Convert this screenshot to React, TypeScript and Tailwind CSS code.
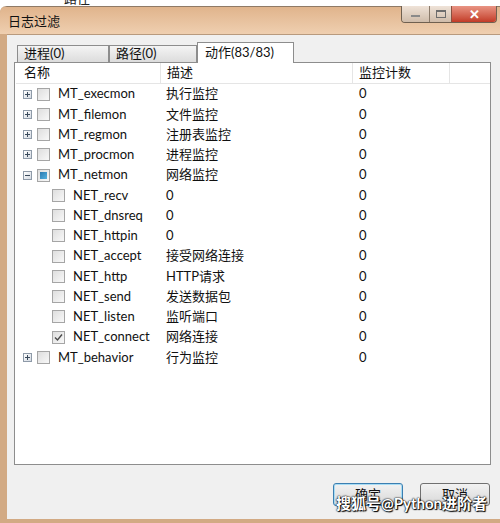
const ui = 'Lato, "Noto Sans CJK SC", sans-serif';

type Row = { name: string; desc: string; level: 0 | 1; state?: "plus" | "minus"; check?: "none" | "on" | "mixed" };

const rows: Row[] = [
  { name: "MT_execmon", desc: "执行监控", level: 0, state: "plus" },
  { name: "MT_filemon", desc: "文件监控", level: 0, state: "plus" },
  { name: "MT_regmon", desc: "注册表监控", level: 0, state: "plus" },
  { name: "MT_procmon", desc: "进程监控", level: 0, state: "plus" },
  { name: "MT_netmon", desc: "网络监控", level: 0, state: "minus", check: "mixed" },
  { name: "NET_recv", desc: "0", level: 1 },
  { name: "NET_dnsreq", desc: "0", level: 1 },
  { name: "NET_httpin", desc: "0", level: 1 },
  { name: "NET_accept", desc: "接受网络连接", level: 1 },
  { name: "NET_http", desc: "HTTP请求", level: 1 },
  { name: "NET_send", desc: "发送数据包", level: 1 },
  { name: "NET_listen", desc: "监听端口", level: 1 },
  { name: "NET_connect", desc: "网络连接", level: 1, check: "on" },
  { name: "MT_behavior", desc: "行为监控", level: 0, state: "plus" },
];

function Expander({ minus }: { minus?: boolean }) {
  return (
    <span className="relative flex h-[9px] w-[9px] items-center justify-center border border-[#8e9aa8] bg-gradient-to-br from-white to-[#d4dae2]">
      <span className="h-px w-[5px] bg-[#3a4a5c]" />
      {!minus && <span className="absolute h-[5px] w-px bg-[#3a4a5c]" />}
    </span>
  );
}

function Check({ state }: { state?: "none" | "on" | "mixed" }) {
  return (
    <span className="flex h-[13px] w-[13px] items-center justify-center border border-[#a5a5a5] bg-gradient-to-br from-[#dedede] to-[#f8f8f8]">
      {state === "mixed" && <span className="h-[7px] w-[7px] bg-gradient-to-br from-[#2a7ab0] to-[#55b2e0]" />}
      {state === "on" && (
        <svg width="9" height="9" viewBox="0 0 9 9">
          <path d="M1 4.5 L3.5 7 L8 1.5" fill="none" stroke="#4a4a4a" strokeWidth="1.4" />
        </svg>
      )}
    </span>
  );
}

function TabButton({ label, w, active }: { label: string; w: string; active?: boolean }) {
  return (
    <div
      className={
        active
          ? `relative z-10 -mb-px flex h-[21px] items-center border border-b-0 border-[#8d8d8d] bg-white pl-[7px] text-[13px] text-[#111] ${w}`
          : `flex h-[17px] items-center border border-b-0 border-[#8d8d8d] bg-gradient-to-b from-[#f4f4f4] to-[#dcdcdc] pl-[6px] text-[13px] text-[#111] ${w}`
      }
    >
      {label}
    </div>
  );
}

export default function App() {
  return (
    <div className="flex h-[523px] w-[500px] flex-col overflow-hidden bg-white" style={{ fontFamily: ui }}>
      <div className="h-[6px] overflow-hidden pl-[64px] text-[13px] leading-none text-[#222]">
        <div className="-mt-[8px]">路径</div>
      </div>

      <div className="flex flex-1 flex-col rounded-tl-[6px] border-t border-l-[7px] border-b-[4px] border-[#d2aa84] border-t-[#8f7a66] bg-[#f0f0f0]">
        <div className="flex h-[27px] -ml-[7px] bg-gradient-to-b from-[#e0b48c] to-[#efcfb0] pl-[8px] rounded-tl-[6px]">
          <div className="mt-[5px] flex-1 text-[13px] text-[#111]">日志过滤</div>
          <div className="mr-[3px] flex h-[17px] -mt-px overflow-hidden rounded-b-[4px] border border-t-0 border-[#6f6050]">
            <div className="flex w-[27px] items-end justify-center bg-gradient-to-b from-[#efe3d8] to-[#cfbcaa] pb-[5px]">
              <span className="h-[2px] w-[9px] bg-[#8a8a8a]" />
            </div>
            <div className="flex w-[22px] items-center justify-center border-l border-[#8a7a6a] bg-gradient-to-b from-[#efe3d8] to-[#cfbcaa]">
              <span className="h-[8px] w-[10px] border border-t-2 border-[#6d6d6d]" />
            </div>
            <div className="flex w-[45px] items-center justify-center border-l border-[#8a5040] bg-gradient-to-b from-[#e89484] to-[#c23a26] text-[13px] font-bold leading-none text-white">
              ✕
            </div>
          </div>
        </div>

        <div className="flex flex-1 flex-col border-t border-[#b89a7e] pl-[7px] pr-[9px]">
          <div className="mt-[6px] flex h-[21px] items-end pl-[3px]">
            <TabButton label="进程(0)" w="w-[92px]" />
            <TabButton label="路径(0)" w="w-[88px]" />
            <TabButton label="动作(83/83)" w="w-[97px]" active />
          </div>

          <div className="flex h-[403px] flex-col border border-[#8d8d8d] bg-white pl-px">
            <div className="flex h-[21px] items-center border-b border-[#e5e5e5] text-[13px] text-[#111]">
              <div className="w-[145px] border-r border-[#e5e5e5] pl-[8px]">名称</div>
              <div className="w-[192px] border-r border-[#e5e5e5] pl-[6px]">描述</div>
              <div className="w-[97px] border-r border-[#e5e5e5] pl-[6px]">监控计数</div>
            </div>
            <div className="flex flex-col">
              {rows.map((r) => (
                <div key={r.name} className="flex h-[20.25px] items-center text-[13px] text-[#111]">
                  <div className="flex w-[145px] items-center">
                    {r.level === 0 ? (
                      <>
                        <span className="ml-[7px]"><Expander minus={r.state === "minus"} /></span>
                        <span className="ml-[5px]"><Check state={r.check} /></span>
                        <span className="ml-[8px]">{r.name}</span>
                      </>
                    ) : (
                      <>
                        <span className="ml-[36px]"><Check state={r.check} /></span>
                        <span className="ml-[8px]">{r.name}</span>
                      </>
                    )}
                  </div>
                  <div className="w-[193px] pl-[5px]">{r.desc}</div>
                  <div className="pl-[5px]">0</div>
                </div>
              ))}
            </div>
          </div>

          <div className="mt-[18px] flex justify-end gap-[17px] pr-[1px]">
            <button className="flex h-[23px] w-[70px] items-center justify-center rounded-[3px] border border-[#3c7fb1] bg-gradient-to-b from-[#f2f2f2] to-[#d8d8d8] text-[13px] text-[#111] shadow-[inset_0_0_0_1px_#a8dcf4]">
              确定
            </button>
            <button className="flex h-[23px] w-[70px] items-center justify-center rounded-[3px] border border-[#707070] bg-gradient-to-b from-[#f2f2f2] to-[#d8d8d8] text-[13px] text-[#111]">
              取消
            </button>
          </div>
          <div className="-mt-[10px] flex justify-end pr-[4px]">
            <span className="text-[15px] font-bold leading-none text-white [text-shadow:0_0_2px_#000,0_0_1px_#000,1px_1px_1px_#000]">
              搜狐号@Python进阶者
            </span>
          </div>
        </div>
      </div>
    </div>
  );
}
